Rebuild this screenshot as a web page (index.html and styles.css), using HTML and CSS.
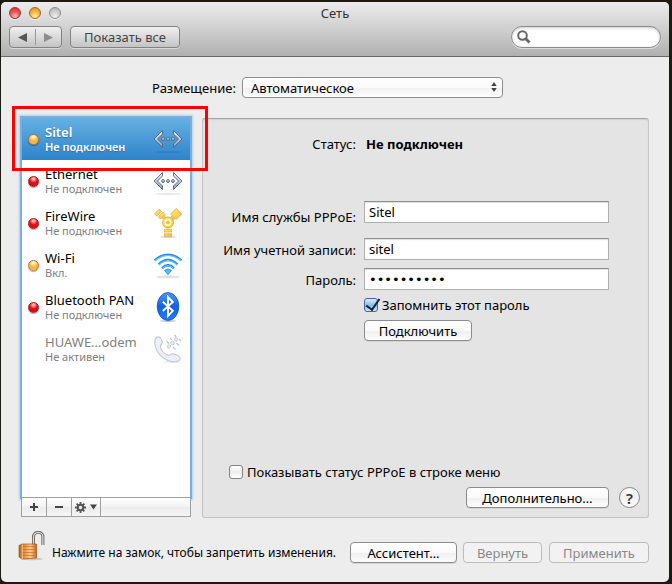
FILE: index.html
```html
<!DOCTYPE html>
<html lang="ru">
<head>
<meta charset="utf-8">
<title>Сеть</title>
<link rel="stylesheet" href="styles.css">
</head>
<body>
<svg class="defs" aria-hidden="true">
  <defs>
    <linearGradient id="steel" x1="0" y1="0" x2="0" y2="1"><stop offset="0" stop-color="#f2f5f9"/><stop offset="1" stop-color="#8e9bb0"/></linearGradient>
    <linearGradient id="gold" x1="0" y1="0" x2="1" y2="1"><stop offset="0" stop-color="#ffe78c"/><stop offset="1" stop-color="#f2c337"/></linearGradient>
    <linearGradient id="sky" x1="0" y1="0" x2="0" y2="1"><stop offset="0" stop-color="#1686dc"/><stop offset="1" stop-color="#2aa9f2"/></linearGradient>
    <linearGradient id="blue" x1="0" y1="0" x2="0" y2="1"><stop offset="0" stop-color="#4a9cf6"/><stop offset=".5" stop-color="#1660de"/><stop offset="1" stop-color="#2180f5"/></linearGradient>
    <linearGradient id="brass" x1="0" y1="0" x2="1" y2="0"><stop offset="0" stop-color="#b5651f"/><stop offset=".3" stop-color="#e88c3c"/><stop offset=".65" stop-color="#ffd08a"/><stop offset="1" stop-color="#c9641f"/></linearGradient>
    <symbol id="ethernet" viewBox="0 0 30 30">
      <ellipse cx="15" cy="28" rx="13" ry="1" fill="#000" opacity=".09"/>
      <g fill="url(#steel)" stroke="#56637b" stroke-width=".9" stroke-linejoin="round">
        <path d="M9.500 6.500v3.500L4.500 15l5 5v3.500L1 15z"/>
        <path d="M20.500 6.500v3.500l5 5-5 5v3.500L29 15z"/>
        <circle cx="10" cy="15" r="1.500"/><circle cx="15" cy="15" r="1.500"/><circle cx="20" cy="15" r="1.500"/>
      </g>
    </symbol>
  </defs>
</svg>
<main class="window">
  <header class="titlebar">
    <div class="caption">
      <div class="lights">
        <button class="light close" aria-label="Закрыть"></button>
        <button class="light minimize" aria-label="Свернуть"></button>
        <button class="light zoom" aria-label="Развернуть"></button>
      </div>
      <h1>Сеть</h1>
    </div>
    <div class="toolbar">
      <div class="segments">
        <button aria-label="Назад"><svg width="9" height="9" viewBox="0 0 9 9"><path d="M9 0v9L0 4.500z" fill="#555"/></svg></button>
        <button aria-label="Вперед"><svg width="9" height="9" viewBox="0 0 9 9"><path d="M0 0v9l9-4.500z" fill="#8d8d8d"/></svg></button>
      </div>
      <button class="show-all">Показать все</button>
      <label class="search">
        <svg width="14" height="14" viewBox="0 0 14 14" fill="none" stroke="#666"><circle cx="5.500" cy="5.500" r="4.300" stroke-width="2"/><path d="M8.500 8.500l4 4" stroke-width="2.800"/></svg>
        <input type="search" aria-label="Поиск">
      </label>
    </div>
  </header>

  <div class="content">
    <div class="location">
      <label for="location">Размещение:</label>
      <span class="popup">
        <select id="location"><option>Автоматическое</option></select>
        <svg width="6" height="10" viewBox="0 0 6 10" fill="#444"><path d="M3 0l2.700 4H.3zM3 10L.3 6h5.400z"/></svg>
      </span>
    </div>

    <div class="panes">
      <aside class="sidebar">
        <ul class="services">
          <li class="selected">
            <span class="dot amber"></span>
            <span class="text"><span class="name">Sitel</span><span class="state">Не подключен</span></span>
            <svg class="icon" width="30" height="30"><use href="#ethernet"/></svg>
          </li>
          <li>
            <span class="dot red"></span>
            <span class="text"><span class="name">Ethernet</span><span class="state">Не подключен</span></span>
            <svg class="icon" width="30" height="30"><use href="#ethernet"/></svg>
          </li>
          <li>
            <span class="dot red"></span>
            <span class="text"><span class="name">FireWire</span><span class="state">Не подключен</span></span>
            <svg class="icon" width="30" height="30" viewBox="0 0 30 30">
              <ellipse cx="15" cy="29" rx="8" ry="1" fill="#000" opacity=".15"/>
              <g fill="url(#gold)" stroke="#dba825" stroke-width=".7">
                <path d="M6.500 9.500l3.500-3 3.200 3.200h4L20 7l2.500 2.500-2 2.500z"/>
                <path d="M17.500 6L23.300.600 28.800 6 23 11.500z"/>
                <path d="M6.200 1.200l2.300 2.300-4.700 4.700-2.300-2.300z"/>
                <path d="M10 4.200l2.200 2.200-4.700 4.700-2.200-2.200z"/>
                <circle cx="15" cy="14.500" r="5.600"/>
                <path d="M11.300 21.300h7.400v2.700h-7.400zM11.300 25.700h7.400v2.700h-7.400z"/>
              </g>
              <circle cx="15" cy="14.500" r="2.700" fill="#f0bf36" stroke="#fffbe0" stroke-width="1.600"/>
            </svg>
          </li>
          <li>
            <span class="dot amber"></span>
            <span class="text"><span class="name">Wi-Fi</span><span class="state">Вкл.</span></span>
            <svg class="icon" width="30" height="30" viewBox="0 0 30 30">
              <ellipse cx="15" cy="27" rx="12" ry="1.500" fill="#000" opacity=".12"/>
              <g fill="none" stroke="url(#sky)" stroke-width="2.600">
                <path d="M1.500 10.500Q15-1 28.500 10.500"/><path d="M5.500 14.500Q15 5.500 24.500 14.500"/><path d="M9 18.200Q15 12.500 21 18.200"/>
              </g>
              <g fill="none" stroke="#8bd2fb" stroke-width=".9">
                <path d="M2 10.700Q15-.3 28 10.700"/><path d="M6 14.700Q15 6.200 24 14.700"/><path d="M9.500 18.300Q15 13.200 20.500 18.300"/>
              </g>
              <path d="M11.500 20.500q3.500-3 7 0L15 24.500z" fill="#5fb9f2" stroke="#1d8ade" stroke-width=".9"/>
            </svg>
          </li>
          <li>
            <span class="dot red"></span>
            <span class="text"><span class="name">Bluetooth PAN</span><span class="state">Не подключен</span></span>
            <svg class="icon" width="30" height="30" viewBox="0 0 30 30">
              <ellipse cx="15" cy="29" rx="8" ry="1" fill="#000" opacity=".2"/>
              <ellipse cx="15" cy="14.500" rx="10.800" ry="14" fill="url(#blue)" stroke="#1653b8" stroke-width=".8"/>
              <path d="M9.800 9.800l10 9-4.800 5V5l4.800 5-10 9" fill="none" stroke="#fff" stroke-width="1.900"/>
            </svg>
          </li>
          <li class="inactive">
            <span class="dot"></span>
            <span class="text"><span class="name">HUAWE…odem</span><span class="state">Не активен</span></span>
            <svg class="icon" width="30" height="30" viewBox="0 0 30 30">
              <ellipse cx="19" cy="28" rx="9" ry="1" fill="#000" opacity=".07"/>
              <path d="M3.500 3.500C6 1.800 8.500 4 9.300 8c.3 2-2 2.800-1.800 4.500.8 4 3.500 7.300 7.500 8.800 1.800.5 2.500-2 4.500-1.500 3.500.8 8 2.700 7.700 5-.3 2.300-4.500 3.500-8.500 2.700C10 25.800 3.500 19 2 11c-.5-3-.2-6 1.500-7.500z" fill="#eceff4" stroke="#c0c7d1" stroke-width="1.100"/>
              <g fill="#eef1f5" stroke="#bcc3cd" stroke-width=".9">
                <circle cx="16" cy="12.500" r="1.600"/><circle cx="19.500" cy="9" r="1.800"/><circle cx="23" cy="5.500" r="1.600"/>
                <path d="M20 13l2.500 2.500M13.500 7l2.500 2.500M23.500 9l2.500 2.500M17 4l2 2M26 5l1.800 1.800M21.500 1l1.800 1.800" fill="none" stroke-width="1.300"/>
              </g>
            </svg>
          </li>
        </ul>
        <div class="actions">
          <button aria-label="Добавить"><svg width="8" height="8" viewBox="0 0 8 8"><path d="M3 0h2v3h3v2H5v3H3V5H0V3h3z" fill="#444"/></svg></button>
          <button aria-label="Удалить"><svg width="8" height="8" viewBox="0 0 8 8"><path d="M0 3h8v2H0z" fill="#444"/></svg></button>
          <button class="gear" aria-label="Действия">
            <svg width="22" height="11" viewBox="0 0 22 11"><g stroke="#555" fill="none"><circle cx="5.500" cy="5.500" r="2.700" stroke-width="2"/><path stroke-width="1.800" d="M5.500 0v2.500M5.500 8.500V11M0 5.500h2.500M8.500 5.500H11M1.600 1.600l1.800 1.800M7.600 7.600l1.800 1.800M9.400 1.600L7.600 3.400M3.400 7.600L1.600 9.400"/></g><path d="M15 2.500h7L18.500 7.500z" fill="#444"/></svg>
          </button>
        </div>
        <div class="highlight"></div>
      </aside>

      <section class="details">
        <dl class="status"><dt>Статус:</dt><dd>Не подключен</dd></dl>
        <form class="form">
          <label for="service">Имя службы PPPoE:</label>
          <input class="service" id="service" type="text" value="Sitel">
          <label for="account">Имя учетной записи:</label>
          <input id="account" type="text" value="sitel">
          <label for="password">Пароль:</label>
          <input id="password" type="password" value="password10">
          <label class="check remember"><input type="checkbox" checked>Запомнить этот пароль</label>
          <button class="push connect" type="button">Подключить</button>
        </form>
        <label class="check menu"><input type="checkbox">Показывать статус PPPoE в строке меню</label>
        <div class="more">
          <button class="push advanced">Дополнительно…</button>
          <button class="help" aria-label="Справка">?</button>
        </div>
      </section>
    </div>

    <footer class="footer">
      <button class="lock" aria-label="Замок">
        <svg width="28" height="30" viewBox="0 0 28 30">
          <ellipse cx="14" cy="28" rx="11" ry="1.300" fill="#000" opacity=".15"/>
          <path d="M15.500 14V6a4.700 4.700 0 0 1 9.400 0V14" fill="none" stroke="#666" stroke-width="3"/>
          <path d="M15.500 14V6a4.700 4.700 0 0 1 9.400 0V14" fill="none" stroke="#ddd" stroke-width="1.200"/>
          <path d="M1 14.500l3-1.500h14.500v14L4 28l-3-2z" fill="url(#brass)" stroke="#9d5320" stroke-width=".7"/>
          <path d="M4 15.500h14M4 18.500h14M4 21.500h14M4 24.500h14" stroke="#c56c26" stroke-width=".7"/>
          <path d="M4.300 13.500V28" stroke="#ffdfa7" stroke-width=".8"/>
        </svg>
      </button>
      <p>Нажмите на замок, чтобы запретить изменения.</p>
      <button class="push assistant">Ассистент…</button>
      <button class="push revert" disabled>Вернуть</button>
      <button class="push apply" disabled>Применить</button>
    </footer>
  </div>
</main>
</body>
</html>
```
FILE: styles.css
```css
* { box-sizing: border-box; }

body {
  margin: 0;
  min-height: 100vh;
  display: flex;
  padding: 2px 3px 2px 1px;
  background: #1d1a16;
  color: #000;
  font: 13px/16px "Noto Sans", "Open Sans", sans-serif;
}

button, input, select { font: inherit; color: inherit; margin: 0; padding: 0; }
h1, p, ul, dl, dd { margin: 0; padding: 0; }
svg { display: block; flex: none; }
.defs { position: absolute; width: 0; height: 0; }

.window {
  flex: 1;
  min-width: 0;
  display: flex;
  flex-direction: column;
  border-radius: 5px;
  overflow: hidden;
  background: #ededed;
}

.titlebar {
  height: 55px;
  padding: 0 8px;
  border-bottom: 1px solid #686868;
  background: linear-gradient(#ececec, #cfcfcf 50%, #b0b0b0);
}

.caption {
  display: grid;
  grid-template-columns: 1fr auto 1fr;
  align-items: center;
  height: 22px;
}
.caption h1 { font-size: 13px; font-weight: 400; color: #333; }
.lights { display: flex; gap: 8px; }
.light {
  width: 12px;
  height: 12px;
  border: 1px solid #8b8b8b;
  border-radius: 50%;
  box-shadow: 0 1px 0 #f4f4f4;
}
.close { border-color: #90383a; background: radial-gradient(circle at 50% 85%, #ffb8b0, #ed5558 50%, #c92b31); }
.minimize { border-color: #99652d; background: radial-gradient(circle at 50% 85%, #fff0a0, #f5b34a 50%, #d98b2c); }
.zoom { background: radial-gradient(circle at 50% 85%, #eee, #cfcfcf 50%, #aaa); }

.toolbar { display: flex; gap: 8px; padding-top: 2px; }
.segments, .show-all {
  height: 22px;
  border: 1px solid #828282;
  border-radius: 4px;
  background: linear-gradient(#f0f0f0, #c4c4c4);
  box-shadow: 0 1px 0 #d8d8d8;
}
.segments { display: flex; width: 53px; padding: 2px 0; }
.segments button {
  flex: 1;
  display: flex;
  align-items: center;
  justify-content: center;
  border: 0;
  background: none;
}
.segments button + button { border-left: 1px solid #999; }
.show-all { width: 110px; color: #444; }

.search {
  display: flex;
  align-items: center;
  gap: 4px;
  width: 150px;
  height: 22px;
  margin-left: auto;
  padding: 0 8px 0 5px;
  border: 1px solid #8a8a8a;
  border-radius: 11px;
  background: #fff;
  box-shadow: inset 0 1px 3px #ccc, 0 1px 0 #ddd;
}
.search input { flex: 1; min-width: 0; border: 0; outline: 0; background: none; }

.content {
  flex: 1;
  display: flex;
  flex-direction: column;
  padding: 20px 20px 19px;
}

.location { display: flex; align-items: center; justify-content: center; gap: 6px; padding-right: 15px; }
.popup { position: relative; width: 261px; }
.popup select {
  display: block;
  width: 100%;
  height: 21px;
  padding: 0 20px 0 8px;
  appearance: none;
  border: 1px solid #8c8c8c;
  border-radius: 4px;
  background: linear-gradient(#fff, #fafafa 50%, #f0f0f0 51%, #fff);
}
.popup svg { position: absolute; right: 6px; top: 5px; pointer-events: none; }

.panes { flex: 1; display: flex; gap: 11px; margin-top: 20px; }

.sidebar { position: relative; display: flex; flex-direction: column; width: 170px; padding-bottom: 1px; }
.services {
  flex: 1;
  list-style: none;
  margin: 0 1px;
  background: #fff;
  box-shadow: 0 0 0 2px #78afdc, 0 0 2px 3px #afd0eb;
}
.services li {
  display: flex;
  align-items: center;
  gap: 5px;
  height: 42px;
  padding: 0 7px 0 6px;
}
.text { flex: 1; min-width: 0; white-space: nowrap; }
.name { display: block; font-size: 13px; line-height: 15px; }
.state { display: block; font-size: 11px; line-height: 14px; color: #808080; }
.icon { margin-left: -5px; }
.selected { background: linear-gradient(#65b0e2, #2d84ca); color: #fff; }
.selected .name, .selected .state { color: #fff; font-weight: 600; text-shadow: 0 1px 1px #2d6fa6; }
.inactive .name { color: #808080; }

.dot { width: 11px; height: 11px; margin-right: 1px; border-radius: 50%; flex: none; }
.red, .amber { box-shadow: 0 1px 1px #aaa; border: 1px solid #b31217; }
.red { background: radial-gradient(circle at 50% 20%, #ffb5b5 10%, #e0141b 45%, #c60c14); }
.amber { border-color: #b9762a; background: radial-gradient(circle at 50% 20%, #fff3c9 10%, #f9ad38 55%, #ffd259); }
.selected .dot { box-shadow: 0 1px 1px #24679e; }

.actions {
  display: flex;
  height: 20px;
  border: 1px solid #a0a0a0;
  background: linear-gradient(#fff, #f2f2f2 50%, #ebebeb 51%, #f5f5f5);
}
.actions button {
  display: flex;
  align-items: center;
  justify-content: center;
  width: 25px;
  border: 0;
  border-right: 1px solid #a0a0a0;
  background: none;
}
.actions .gear { width: 29px; }

.highlight {
  position: absolute;
  top: -12px;
  left: -9px;
  right: -17px;
  height: 65px;
  border: 3px solid #f00;
  pointer-events: none;
}

.details {
  flex: 1;
  min-width: 0;
  display: flex;
  flex-direction: column;
  padding: 17px 8px 9px 20px;
  border: 1px solid #c4c4c4;
  border-top-color: #a5a5a5;
  border-radius: 3px;
  background: #e4e4e4;
  box-shadow: inset 0 1px 1px #cfcfcf;
}
.status, .form { display: grid; grid-template-columns: 133px 245px; column-gap: 8px; }
.status dt { text-align: right; }
.status dd { padding-left: 2px; font-weight: 700; }
.form { align-items: center; margin-top: 49px; row-gap: 8px; }
.form > label { white-space: nowrap; justify-self: end; padding-top: 2px; }
.form > input {
  width: 100%;
  height: 22px;
  padding: 0 4px;
  border: 1px solid #b0b0b0;
  border-top-color: #8f8f8f;
  background: #fff;
  box-shadow: inset 0 1px 1px #ddd;
}
.form .service { margin-bottom: 7px; }
.form #password { font-family: "DejaVu Sans", sans-serif; }
.form .remember { grid-column: 2; justify-self: start; padding: 0; }
.connect { grid-column: 2; width: 108px; }

.check { display: flex; align-items: center; gap: 4px; line-height: 14px; white-space: nowrap; }
.check input {
  appearance: none;
  width: 14px;
  height: 14px;
  border: 1px solid #858585;
  border-radius: 3px;
  background: linear-gradient(#fff, #eee 50%, #fff);
}
.check input:checked { position: relative; border-color: #5161a5; background: linear-gradient(#dcecfa, #83bdf0 55%, #c0ecff); }
.check input:checked::after {
  content: "";
  position: absolute;
  left: 4px;
  top: -3px;
  width: 6px;
  height: 12px;
  border: solid #14202f;
  border-width: 0 2px 2px 0;
  transform: rotate(35deg);
}
.menu { align-self: flex-start; margin: auto 0 8px 6px; }

.push {
  height: 21px;
  border: 1px solid #8c8c8c;
  border-radius: 4px;
  background: linear-gradient(#fff, #fafafa 50%, #efefef 51%, #fdfdfd);
  box-shadow: 0 1px 0 #d5d5d5;
  white-space: nowrap;
}
.push:disabled { border-color: #bcbcbc; color: #888; background: #f2f2f2; box-shadow: none; }

.more { display: flex; justify-content: flex-end; gap: 10px; }
.advanced { width: 143px; }
.help {
  width: 21px;
  height: 21px;
  border: 1px solid #858585;
  border-radius: 50%;
  background: linear-gradient(#fff, #f0f0f0 50%, #fff);
  font-size: 15px;
  font-weight: 600;
  line-height: 18px;
  color: #333;
}

.footer { display: flex; align-items: center; height: 21px; margin-top: 24px; }
.lock { border: 0; margin: -14px 0 0 -3px; background: none; }
.footer p { margin-left: 6px; font-size: 12px; white-space: nowrap; }
.assistant { width: 107px; margin-left: auto; }
.revert { width: 79px; margin-left: 6px; }
.apply { width: 100px; margin-left: 7px; }
```
